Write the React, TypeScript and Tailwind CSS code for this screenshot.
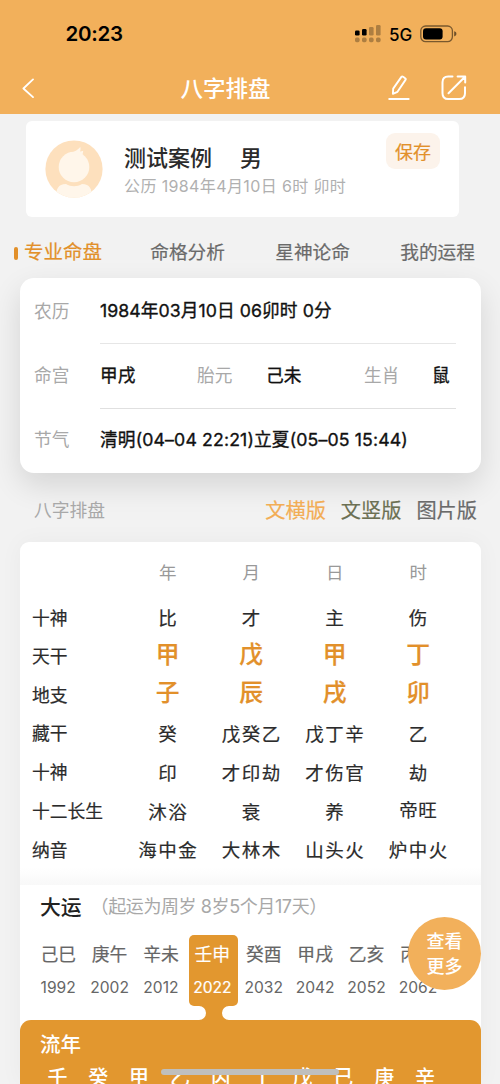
import React from "react";

const pillars = ["年", "月", "日", "时"];

type ChartRow = { label: string; values: string[]; h: string; big?: boolean };

const chart: ChartRow[] = [
  { label: "十神", values: ["比", "才", "主", "伤"], h: "h-[38px]" },
  { label: "天干", values: ["甲", "戊", "甲", "丁"], h: "h-[39px]", big: true },
  { label: "地支", values: ["子", "辰", "戌", "卯"], h: "h-[38px]", big: true },
  { label: "藏干", values: ["癸", "戊癸乙", "戊丁辛", "乙"], h: "h-[39px]" },
  { label: "十神", values: ["印", "才印劫", "才伤官", "劫"], h: "h-[39px]" },
  { label: "十二长生", values: ["沐浴", "衰", "养", "帝旺"], h: "h-[39px]" },
  { label: "纳音", values: ["海中金", "大林木", "山头火", "炉中火"], h: "h-[38px]" },
];

const decades = [
  ["己巳", "1992"],
  ["庚午", "2002"],
  ["辛未", "2012"],
  ["壬申", "2022"],
  ["癸酉", "2032"],
  ["甲戌", "2042"],
  ["乙亥", "2052"],
  ["丙子", "2062"],
];

const years = ["壬", "癸", "甲", "乙", "丙", "丁", "戊", "己", "庚", "辛"];

function StatusBar() {
  return (
    <div className="flex h-[62px] items-center justify-between pt-[6px] pr-[43px] pl-[65.500px] text-black">
      <span className="text-[20.500px] font-semibold tracking-[-0.300px]">20:23</span>
      <div className="flex items-center">
        <svg width="27" height="18" viewBox="0 0 27 18" fill="#000">
          <rect x="0" y="5.5" width="4.6" height="5" rx="1.3" />
          <rect x="7" y="4" width="4.6" height="6.5" rx="1.3" />
          <g opacity="0.28">
            <rect x="14" y="2" width="4.6" height="8.5" rx="1.3" />
            <rect x="21" y="0" width="4.6" height="10.5" rx="1.3" />
            <rect x="0" y="12.6" width="4.6" height="4.6" rx="1.6" />
            <rect x="7" y="12.6" width="4.6" height="4.6" rx="1.6" />
            <rect x="14" y="12.6" width="4.6" height="4.6" rx="1.6" />
            <rect x="21" y="12.6" width="4.6" height="4.6" rx="1.6" />
          </g>
        </svg>
        <span className="ml-[7px] w-[31px] pt-px text-[17px] leading-5 font-medium">5G</span>
        <svg width="37" height="18" viewBox="0 0 37 18">
          <rect x="0.8" y="1" width="31.6" height="15.6" rx="4.8" fill="none" stroke="#000" strokeOpacity="0.5" strokeWidth="1.3" />
          <rect x="3" y="3.2" width="19.6" height="11.2" rx="3" fill="#000" />
          <path d="M34.2 6.2c1.8.6 2.2 1.5 2.2 2.6s-.4 2-2.2 2.6z" fill="#000" fillOpacity="0.55" />
        </svg>
      </div>
    </div>
  );
}

function NavBar() {
  return (
    <div className="flex h-[52px] items-center pr-[33px] pl-[22px] text-white">
      <svg width="14" height="20" viewBox="0 0 14 20" fill="none" stroke="#fff" strokeWidth="1.8" strokeLinecap="round" strokeLinejoin="round">
        <path d="M11 1.4 1.4 10.500l9.600 8.700" />
      </svg>
      <h1 className="ml-[144.500px] pt-[2px] text-[22.500px] leading-8 font-medium">八字排盘</h1>
      <div className="ml-auto flex items-center gap-[31px]">
        <svg width="22" height="26" viewBox="0 0 22 26" fill="none" stroke="#fff" strokeWidth="1.9" strokeLinecap="round" strokeLinejoin="round">
          <path d="M13.400 1.900 5.200 13.600l-.3 5.200 4.600-2L17.500 4.900c.4-.7.3-1.300-.3-1.700l-2.100-1.500c-.6-.4-1.300-.3-1.700.2zM1.200 24h19.500" />
        </svg>
        <svg width="26" height="26" viewBox="0 0 26 26" fill="none" stroke="#fff" strokeWidth="2" strokeLinecap="round" strokeLinejoin="round">
          <path d="M11.500 1.500H7.200C3.500 1.500 1.500 3.500 1.500 7.200v11C1.500 22 3.500 24 7.200 24h11c3.800 0 5.800-2 5.800-5.800v-6M7.500 18.200 24 1.700M16.600 1.500H24.200V7.500" />
        </svg>
      </div>
    </div>
  );
}

function Avatar() {
  return (
    <svg width="58" height="58" viewBox="0 0 58 58" className="shrink-0">
      <defs>
        <clipPath id="face">
          <circle cx="29" cy="29" r="28.6" />
        </clipPath>
      </defs>
      <circle cx="29" cy="29" r="28.6" fill="#fde0bd" />
      <g clipPath="url(#face)" fill="#fff6ea">
        <circle cx="29" cy="27" r="15.300" />
        <path d="M25 12.500c4.500-.3 7.800-2.500 10.300-5.500.5 1.800.3 3-.3 4.500 1.300-.1 2.200-.3 3.200-.8-.2 2.600-.7 4.300-1.700 6.300z" />
        <path d="M11 58c0-9 2-14 10-14 5 3 11 3 16 0 8 0 10 5 10 14z" />
      </g>
    </svg>
  );
}

export default function App() {
  return (
    <div className="h-[1084px] w-[500px] overflow-hidden bg-[#f2f2f2] font-['Inter','Noto_Sans_CJK_SC',sans-serif] whitespace-nowrap">
      <header className="h-[114px] bg-[#f2b05b]">
        <StatusBar />
        <NavBar />
      </header>

      <section className="mt-[7px] ml-[26px] flex h-[96px] w-[433px] rounded-[6px] bg-white pl-[19px]">
        <div className="pt-[19px]">
          <Avatar />
        </div>
        <div className="ml-[21px] flex-1 pt-[23px]">
          <div className="flex gap-[28px] text-[22px] leading-[28px] font-medium text-[#2b2b2b]">
            <span>测试案例</span>
            <span>男</span>
          </div>
          <div className="text-[16px] leading-[28px] tracking-[0.380px] text-[#b0b0b0]">公历 1984年4月10日 6时 卯时</div>
        </div>
        <button className="mt-[12px] mr-[19px] h-[36px] w-[54px] rounded-[9px] bg-[#fcf3eb] pt-px text-[18px] leading-[37px] text-[#e2902a] [-webkit-text-stroke:0.2px]">
          保存
        </button>
      </section>

      <nav className="flex h-[61px] items-center justify-between pt-[11px] pr-[25px] pl-[14px] text-[18.700px] text-[#6a6a6a] [-webkit-text-stroke:0.2px]">
        <span className="-mr-[2px] flex items-center gap-[6px] text-[19.500px] text-[#e2902a]">
          <i className="h-[13px] w-[4px] rounded-[2px] bg-[#e2902a]" />
          专业命盘
        </span>
        <span>命格分析</span>
        <span>星神论命</span>
        <span>我的运程</span>
      </nav>

      <section className="relative ml-[20px] h-[195px] w-[461px] rounded-[14px] bg-white pr-[25px] pl-[14px] text-[17.700px] text-[#111] shadow-[0_12px_30px_rgba(0,0,0,0.12)]">
        <div className="flex h-[66px]">
          <span className="w-[66px] leading-[67px] text-[#a8a8a8]">农历</span>
          <span className="flex-1 border-b border-[#e6e6e6] leading-[66px] tracking-[0.070px] [-webkit-text-stroke:0.35px]">1984年03月10日 06卯时 0分</span>
        </div>
        <div className="flex h-[65px] leading-[63px]">
          <span className="w-[66px] text-[#a8a8a8]">命宫</span>
          <div className="flex flex-1 border-b border-[#e0e0e0]">
            <span className="w-[97px] [-webkit-text-stroke:0.35px]">甲戌</span>
            <span className="w-[69px] text-[#a8a8a8]">胎元</span>
            <span className="w-[98px] [-webkit-text-stroke:0.35px]">己未</span>
            <span className="w-[68px] text-[#a8a8a8]">生肖</span>
            <span className="[-webkit-text-stroke:0.35px]">鼠</span>
          </div>
        </div>
        <div className="flex h-[64px] leading-[61px]">
          <span className="w-[66px] text-[#a8a8a8]">节气</span>
          <span className="tracking-[0.140px] [-webkit-text-stroke:0.35px]">清明(04–04 22:21)立夏(05–05 15:44)</span>
        </div>
      </section>

      <div className="relative flex h-[69px] items-center justify-between pt-[7px] pr-[23px] pl-[34px]">
        <span className="text-[17.800px] text-[#a8a8a8]">八字排盘</span>
        <div className="flex gap-[15px] text-[20.200px] [-webkit-text-stroke:0.2px]">
          <span className="text-[#f2ad55]">文横版</span>
          <span className="text-[#6c7053]">文竖版</span>
          <span className="text-[#6a6a6a]">图片版</span>
        </div>
      </div>

      <main className="relative ml-[20px] h-[542px] w-[461px] rounded-t-[9px] bg-white shadow-[0_0_24px_rgba(0,0,0,0.04)]">
        <div className="h-[343px] bg-linear-to-b from-transparent from-95% to-[#f8f8f8] pl-[12px]">
          <div className="flex h-[57px] pt-[12px] pl-[94px] text-[17.500px] leading-[38px] text-[#999]">
            {pillars.map((p) => (
              <span key={p} className="w-[83.500px] text-center">{p}</span>
            ))}
          </div>
          {chart.map((row, i) => (
            <div key={i} className={"flex items-center text-[#2b2b2b] [-webkit-text-stroke:0.2px] " + row.h}>
              <span className="w-[94px] pt-[2px] text-[17.800px]">{row.label}</span>
              {row.values.map((v, j) => (
                <span
                  key={j}
                  className={
                    row.big
                      ? "w-[83.500px] pb-[4px] text-center text-[23.800px] leading-[32px] font-medium text-[#e2902a]"
                      : v === "帝旺"
                        ? "w-[83.500px] pb-[4px] text-center text-[18.500px] leading-[28px] tracking-[0.500px]"
                        : "w-[83.500px] pl-px text-center text-[18.500px] leading-[28px] tracking-[1.500px]"
                  }
                >
                  {v}
                </span>
              ))}
            </div>
          ))}
        </div>

        <div className="flex h-[46px] items-center pl-[20px]">
          <h2 className="text-[20.800px] font-medium text-[#222]">大运</h2>
          <span className="ml-[9px] pb-[4px] text-[18px] tracking-[-0.400px] text-[#a8a8a8]">（起运为周岁 8岁5个月17天）</span>
        </div>

        <div className="mt-[4px] ml-[12.500px] flex h-[85px]">
          {decades.map(([name, year]) => {
            const on = year === "2022";
            return (
              <div key={year} className="relative flex w-[51.400px] shrink-0 justify-center">
                <div
                  className={
                    on
                      ? "ml-[3px] h-[71px] w-[49px] shrink-0 rounded-[5px] bg-[#e2972f] pr-[3px] text-center text-white [-webkit-text-stroke:0.2px]"
                      : "h-[71px] w-[49px] shrink-0 text-center text-[#666]"
                  }
                >
                  <div className="pt-[6px] text-[17.800px] leading-[28px] [-webkit-text-stroke:0.2px]">{name}</div>
                  <div className="pt-[6px] text-[15.600px] leading-[26px]">{year}</div>
                </div>
                {on && (
                  <svg className="absolute top-[70px] left-[9.500px]" width="36" height="16" viewBox="0 0 36 16">
                    <path d="M3 0V1A7 7 0 0 1 3 15V16H33V15A7 7 0 0 1 33 1V0Z" fill="#e2972f" />
                  </svg>
                )}
              </div>
            );
          })}
        </div>

        <div className="h-[64px] rounded-t-[11px] bg-[#e2972f] text-white">
          <h2 className="pt-[9px] pl-[20px] text-[20.500px] leading-[32px] font-medium">流年</h2>
          <div className="flex pt-[2px] pl-[17px] text-[20px] leading-[30px] font-medium">
            {years.map((y) => (
              <span key={y} className="w-[40.850px] text-center">{y}</span>
            ))}
          </div>
        </div>

        <button className="absolute top-[375px] left-[388px] flex size-[73px] flex-col items-center justify-center rounded-full bg-[#f2b05b] text-[18px] leading-[25px] font-medium text-white">
          <span>查看</span>
          <span>更多</span>
        </button>
        <div className="absolute top-[527px] left-[141px] h-[6px] w-[178px] rounded-full bg-[#bfbfbd]" />
      </main>
    </div>
  );
}
